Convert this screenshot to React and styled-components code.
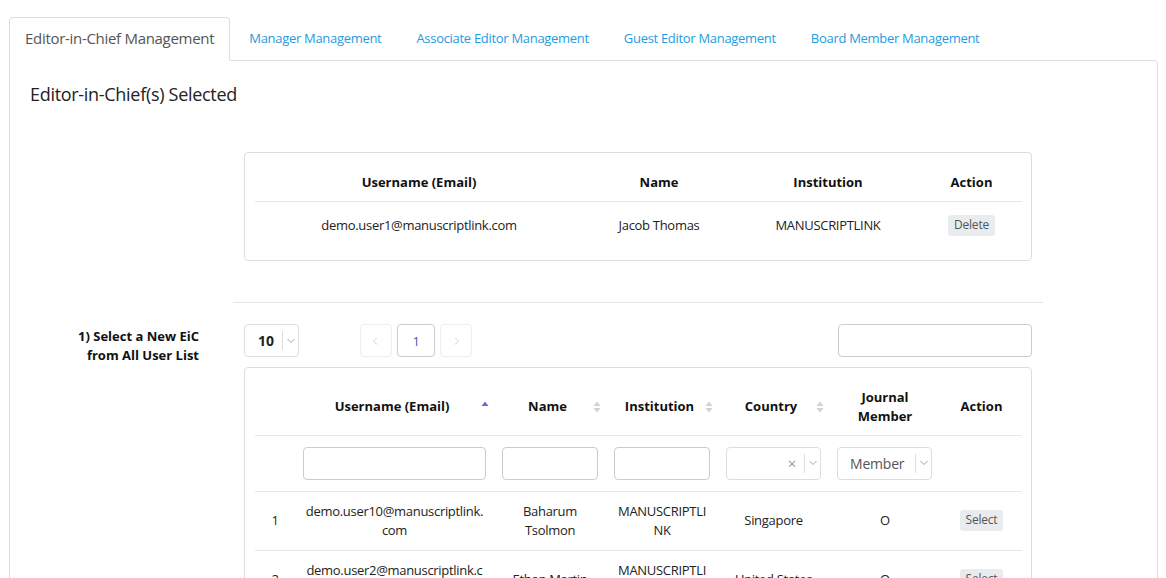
import React from "react";
import styled, { createGlobalStyle } from "styled-components";

const GlobalStyle = createGlobalStyle`
  * { box-sizing: border-box; }
  body {
    margin: 0;
    background: #fff;
    color: #222;
    font-family: "Open Sans", "Liberation Sans", sans-serif;
    letter-spacing: -0.3px;
  }
`;

const Page = styled.div`
  padding: 17px 8px 0 9px;
`;

const Tabs = styled.ul`
  display: flex;
  margin: 0 0 -1px 0;
  padding: 0;
  list-style: none;
  position: relative;
  z-index: 1;
`;

const Tab = styled.li`
  margin-right: 3px;
  padding: 9px 15px 11px;
  line-height: 22px;
  font-size: ${(p) => (p.$active ? "15px" : "13px")};
  color: ${(p) => (p.$active ? "#555" : "#259ce0")};
  background: ${(p) => (p.$active ? "#fff" : "transparent")};
  border: 1px solid ${(p) => (p.$active ? "#ddd" : "transparent")};
  border-bottom-color: ${(p) => (p.$active ? "#fff" : "transparent")};
  border-radius: 4px 4px 0 0;
  cursor: pointer;
`;

const Panel = styled.div`
  border: 1px solid #ddd;
  border-radius: 0 4px 0 0;
  padding-bottom: 40px;
`;

const Title = styled.h3`
  margin: 0;
  padding: 21px 20px 0;
  font-size: 18px;
  line-height: 24px;
  font-weight: 400;
  color: #222;
`;

const Box = styled.div`
  width: 788px;
  margin-left: ${(p) => p.$offset || 0}px;
  margin-top: ${(p) => p.$top || 0}px;
  border: 1px solid #ddd;
  border-radius: 4px;
  padding: 10px;
`;

const Divider = styled.hr`
  width: 810px;
  margin: 41px 0 0 223px;
  border: 0;
  border-top: 1px solid #e6e6e6;
`;

const Table = styled.table`
  width: 100%;
  border-collapse: collapse;
  table-layout: fixed;
  font-size: 13px;
  line-height: 19px;
`;

const Th = styled.th`
  padding: ${(p) => (p.$sort ? "10px 5px 9px 8px" : "10px 8px 9px")};
  font-weight: 700;
  letter-spacing: 0;
  color: #111;
  text-align: center;
  vertical-align: middle;
  border-bottom: 1px solid #e6e6e6;
`;

const HeadInner = styled.div`
  display: flex;
  align-items: center;
`;

const HeadLabel = styled.span`
  flex: 1;
  text-align: center;
`;

const Td = styled.td`
  padding: ${(p) => p.$pad || "10px 9px"};
  height: ${(p) => (p.$h ? `${p.$h}px` : "auto")};
  text-align: center;
  vertical-align: middle;
  color: #222;
  overflow-wrap: anywhere;
`;

const Tr = styled.tr`
  border-bottom: ${(p) => (p.$line ? "1px solid #e6e6e6" : "none")};
`;

const SmallButton = styled.button`
  border: 0;
  border-radius: 3px;
  background: #e9ecef;
  color: #555;
  font-family: inherit;
  font-size: 12px;
  letter-spacing: -0.2px;
  line-height: 16px;
  padding: 2px 6px 3px;
  cursor: pointer;
`;

const PickRow = styled.div`
  display: grid;
  grid-template-columns: 189px 788px;
  column-gap: 45px;
  margin-top: 21px;
`;

const PickLabel = styled.div`
  text-align: right;
  font-weight: 700;
  font-size: 13px;
  line-height: 19px;
  letter-spacing: 0;
  padding-top: 3px;
  color: #111;
`;

const Controls = styled.div`
  display: flex;
  align-items: center;
  height: 34px;
`;

const SelectBox = styled.div`
  display: flex;
  align-items: center;
  width: ${(p) => p.$w}px;
  height: 33px;
  border: 1px solid #ddd;
  border-radius: 4px;
  background: #fff;
  font-size: 14px;
  color: #555;
`;

const SelectValue = styled.span`
  flex: 1;
  padding-left: ${(p) => p.$pl || 12}px;
  text-align: left;
  font-weight: ${(p) => (p.$bold ? 700 : 400)};
  letter-spacing: ${(p) => (p.$bold ? "0" : "-0.2px")};
  color: ${(p) => (p.$bold ? "#222" : "#555")};
`;

const ClearMark = styled.span`
  color: #999;
  font-size: 15px;
  padding-right: 8px;
  line-height: 1;
`;

const Chevron = styled.span`
  display: flex;
  align-items: center;
  justify-content: center;
  width: 16px;
  height: 19px;
  border-left: 1px solid #ddd;
`;

const Pager = styled.div`
  display: flex;
  gap: 5px;
  margin-left: 61px;
`;

const PageBtn = styled.div`
  display: flex;
  align-items: center;
  justify-content: center;
  width: ${(p) => (p.$current ? 38 : 32)}px;
  height: 33px;
  border: 1px solid ${(p) => (p.$current ? "#ccc" : "#eee")};
  border-radius: 4px;
  font-size: 13px;
  color: ${(p) => (p.$current ? "#5d4fc0" : "#ccc")};
`;

const Search = styled.input`
  margin-left: auto;
  width: 194px;
  height: 33px;
  border: 1px solid #ccc;
  border-radius: 4px;
  margin-top: -1px;
`;

const FilterInput = styled.input`
  display: block;
  width: 100%;
  height: 33px;
  border: 1px solid #ccc;
  border-radius: 4px;
`;

const ChevronIcon = ({ color = "#999", dir = "down", size = 8 }) => {
  const pts = {
    down: "0.5,2 4,5.5 7.5,2",
    left: "5,0.5 1.5,4 5,7.5",
    right: "3,0.5 6.5,4 3,7.5",
  }[dir];
  return (
    <svg width={size} height={size} viewBox="0 0 8 8">
      <polyline points={pts} fill="none" stroke={color} strokeWidth="0.9" />
    </svg>
  );
};

const SortIcon = ({ active }) => (
  <svg width="8" height="14" viewBox="0 0 8 14">
    <path d="M4 1.5 L7.5 6 L0.5 6 Z" fill={active ? "#7466d8" : "#d3d3d3"} />
    {!active && <path d="M4 12.5 L7.5 8 L0.5 8 Z" fill="#d3d3d3" />}
  </svg>
);

const users = [
  ["demo.user10@manuscriptlink.com", "Baharum Tsolmon", "MANUSCRIPTLINK", "Singapore", "O"],
  ["demo.user2@manuscriptlink.com", "Ethan Martin", "MANUSCRIPTLINK", "United States", "O"],
  ["demo.user3@manuscriptlink.com", "Olivia Brown", "MANUSCRIPTLINK", "Canada", "O"],
];

function SortHead({ children, active }) {
  return (
    <Th $sort>
      <HeadInner>
        <HeadLabel>{children}</HeadLabel>
        <SortIcon active={active} />
      </HeadInner>
    </Th>
  );
}

export default function App() {
  const tabs = [
    "Editor-in-Chief Management",
    "Manager Management",
    "Associate Editor Management",
    "Guest Editor Management",
    "Board Member Management",
  ];

  return (
    <Page>
      <GlobalStyle />
      <Tabs>
        {tabs.map((t, i) => (
          <Tab key={t} $active={i === 0}>
            {t}
          </Tab>
        ))}
      </Tabs>
      <Panel>
        <Title>Editor-in-Chief(s) Selected</Title>

        <Box $offset={234} $top={46}>
          <Table>
            <colgroup>
              <col style={{ width: 328 }} />
              <col style={{ width: 152 }} />
              <col style={{ width: 186 }} />
              <col style={{ width: 101 }} />
            </colgroup>
            <thead>
              <Tr $line>
                <Th>Username (Email)</Th>
                <Th>Name</Th>
                <Th>Institution</Th>
                <Th>Action</Th>
              </Tr>
            </thead>
            <tbody>
              <Tr>
                <Td $pad="0 8px" $h={48}>demo.user1@manuscriptlink.com</Td>
                <Td $pad="0 8px" $h={48}>Jacob Thomas</Td>
                <Td $pad="0 8px" $h={48}>MANUSCRIPTLINK</Td>
                <Td $pad="0 8px" $h={48}>
                  <SmallButton>Delete</SmallButton>
                </Td>
              </Tr>
            </tbody>
          </Table>
        </Box>

        <Divider />

        <PickRow>
          <PickLabel>
            1) Select a New EiC
            <br />
            from All User List
          </PickLabel>
          <div>
            <Controls>
              <SelectBox $w={55}>
                <SelectValue $bold $pl={13}>10</SelectValue>
                <Chevron>
                  <ChevronIcon />
                </Chevron>
              </SelectBox>
              <Pager>
                <PageBtn>
                  <ChevronIcon dir="left" color="#ccc" />
                </PageBtn>
                <PageBtn $current>1</PageBtn>
                <PageBtn>
                  <ChevronIcon dir="right" color="#ccc" />
                </PageBtn>
              </Pager>
              <Search />
            </Controls>

            <Box $top={9}>
              <Table>
                <colgroup>
                  <col style={{ width: 40 }} />
                  <col style={{ width: 199 }} />
                  <col style={{ width: 112 }} />
                  <col style={{ width: 112 }} />
                  <col style={{ width: 111 }} />
                  <col style={{ width: 112 }} />
                  <col style={{ width: 81 }} />
                </colgroup>
                <thead>
                  <Tr $line>
                    <Th />
                    <SortHead active>Username (Email)</SortHead>
                    <SortHead>Name</SortHead>
                    <SortHead>Institution</SortHead>
                    <SortHead>Country</SortHead>
                    <Th>
                      Journal
                      <br />
                      Member
                    </Th>
                    <Th>Action</Th>
                  </Tr>
                </thead>
                <tbody>
                  <Tr $line>
                    <Td $pad="11px 8px" />
                    <Td $pad="11px 8px">
                      <FilterInput />
                    </Td>
                    <Td $pad="11px 8px">
                      <FilterInput />
                    </Td>
                    <Td $pad="11px 8px">
                      <FilterInput />
                    </Td>
                    <Td $pad="11px 8px">
                      <SelectBox $w={95}>
                        <SelectValue />
                        <ClearMark>×</ClearMark>
                        <Chevron>
                          <ChevronIcon />
                        </Chevron>
                      </SelectBox>
                    </Td>
                    <Td $pad="11px 8px">
                      <SelectBox $w={95}>
                        <SelectValue>Member</SelectValue>
                        <Chevron>
                          <ChevronIcon />
                        </Chevron>
                      </SelectBox>
                    </Td>
                    <Td $pad="11px 8px" />
                  </Tr>
                  {users.map((u, i) => (
                    <Tr $line key={u[0]}>
                      <Td>{i + 1}</Td>
                      <Td>{u[0]}</Td>
                      <Td>{u[1]}</Td>
                      <Td>{u[2]}</Td>
                      <Td>{u[3]}</Td>
                      <Td>{u[4]}</Td>
                      <Td>
                        <SmallButton>Select</SmallButton>
                      </Td>
                    </Tr>
                  ))}
                </tbody>
              </Table>
            </Box>
          </div>
        </PickRow>
      </Panel>
    </Page>
  );
}
